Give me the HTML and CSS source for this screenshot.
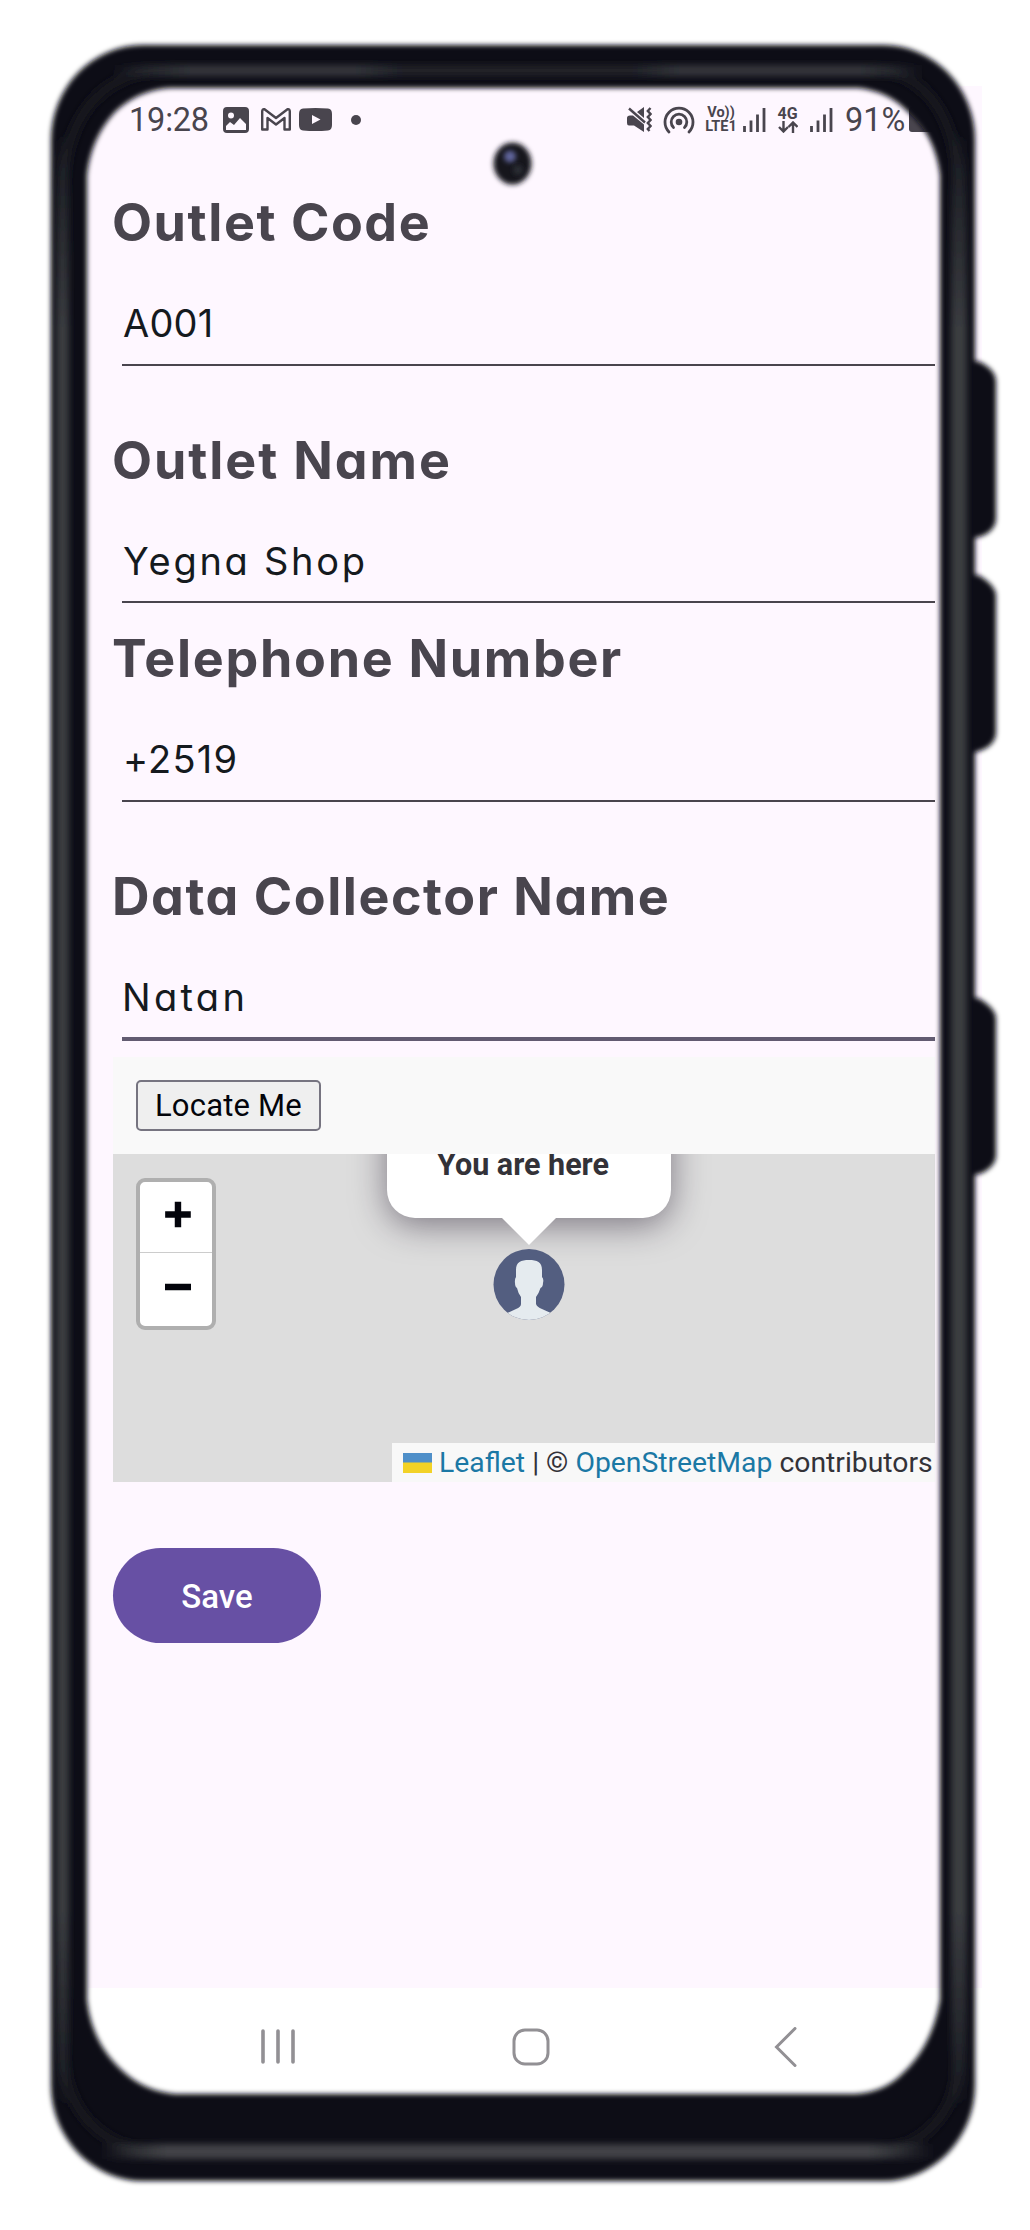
FILE: index.html
```html
<!DOCTYPE html>
<html lang="en">
<head>
<meta charset="utf-8">
<title>Outlet details</title>
<link rel="stylesheet" href="styles.css">
</head>
<body>
<main class="phone">
  <div class="screen">
    <header class="status">
      <div class="status-left">
        <span class="clock">19:28</span>
        <svg class="ic-image" width="26" height="26" viewBox="0 0 26 26"><path fill="#49454e" fill-rule="evenodd" d="M4 0H22Q26 0 26 4V22Q26 26 22 26H4Q0 26 0 22V4Q0 0 4 0ZM8 5.500A3 3 0 1 0 8 11.500A3 3 0 1 0 8 5.500ZM3 23H23V17L17 11L11 18L7 15L3 19Z"/></svg>
        <svg class="ic-mail" width="30" height="23" viewBox="0 0 30 23"><path fill="none" stroke="#49454e" stroke-width="2.400" stroke-linejoin="round" d="M1.200 21.500V3.500Q1.200 1 3.500 1.200L15 10L26.500 1.200Q28.800 1 28.800 3.500V21.500H23.500V10L15 16.500L6.500 10V21.500Z"/></svg>
        <svg class="ic-video" width="33" height="23" viewBox="0 0 33 23"><path fill="#49454e" fill-rule="evenodd" d="M4 .6Q16.500 -.5 29 .6Q33 1 33 6V17Q33 22 29 22.500Q16.500 23.500 4 22.500Q0 22 0 17V6Q0 1 4 .6ZM13 7V16L21.500 11.500Z"/></svg>
        <i class="dot"></i>
      </div>
      <div class="status-right">
        <svg class="ic-mute" width="25" height="25" viewBox="0 0 25 25"><path fill="#49454e" d="M0 11Q0 8.500 3 8.500H6L17 17.500V25L7 18.500H2Q0 18.500 0 16ZM10 5L17 0V11Z"/><path d="M2 1.500L18 15.500" stroke="#49454e" stroke-width="2.400"/><path d="M23.500 1L20.800 4L23.500 7L20.800 10L23.500 13L20.800 16L23.500 19L20.800 22L22.500 24" fill="none" stroke="#49454e" stroke-width="2.400"/></svg>
        <svg class="ic-hot" width="32" height="28" viewBox="0 0 32 28"><g fill="none" stroke="#49454e" stroke-width="2.800" stroke-linecap="round"><path d="M6 26A14 14 0 1 1 26 26"/><path d="M10.500 21.500A7.800 7.800 0 1 1 21.500 21.500"/></g><circle cx="16" cy="16" r="3.300" fill="#49454e"/></svg>
        <span class="volte"><b>Vo))</b><b>LTE1</b></span>
        <svg class="ic-sig" width="23" height="24" viewBox="0 0 23 24"><path stroke="#49454e" stroke-width="2.800" d="M1.500 24V18M8 24V12.500M14.500 24V6.500M21 24V0"/></svg>
        <span class="net"><b>4G</b><svg width="20" height="12" viewBox="0 0 20 12"><path fill="none" stroke="#49454e" stroke-width="2.400" d="M5.500 0V10M1 6L5.500 10.500L10 6M15 12V2M10.500 6L15 1.500L19.500 6"/></svg></span>
        <svg class="ic-sig2" width="23" height="24" viewBox="0 0 23 24"><path stroke="#49454e" stroke-width="2.800" d="M1.500 24V18M8 24V12.500M14.500 24V6.500M21 24V0"/></svg>
        <span class="percent">91%</span>
        <i class="battery"></i>
      </div>
    </header>
    <form class="form">
      <div class="field wide"><label class="code-label">Outlet Code</label><div class="value code"><span>A001</span></div></div>
      <div class="field"><label class="name-label">Outlet Name</label><div class="value name"><span>Yegna Shop</span></div></div>
      <div class="field wide"><label class="phone-label">Telephone Number</label><div class="value tel"><span>+2519</span></div></div>
      <div class="field last"><label class="collector-label">Data Collector Name</label><div class="value collector focused"><span>Natan</span></div></div>
      <section class="locator">
        <div class="toolbar"><button type="button" class="locate">Locate Me</button></div>
        <div class="map">
          <div class="zoom">
            <svg width="72" height="71" viewBox="0 0 72 71"><path stroke="#03040b" stroke-width="6.500" d="M25 33H51M38 20V46"/></svg>
            <svg width="72" height="72" viewBox="0 0 72 72"><path stroke="#03040b" stroke-width="6.500" d="M25 34H51"/></svg>
          </div>
          <div class="popup">You are here</div>
          <svg class="pin" width="72" height="104" viewBox="0 0 72 104">
            <defs><clipPath id="disc"><circle cx="36" cy="67.500" r="35.500"/></clipPath></defs>
            <path d="M7 -1H65L36 28Z" fill="#fff"/>
            <circle cx="36" cy="67.500" r="35.500" fill="#535e80"/>
            <path clip-path="url(#disc)" fill="#e5ebef" d="M36 43C44 43 49 45 49 53V60Q51 62 50 66Q50 70 47.500 71Q46 76 43 80V87Q44 90 49 92L60 97V104H12V97L23 92Q28 90 28 87V80Q25 76 24 71Q22 70 22 66Q21.500 62 23 60V53C23 45 28 43 36 43Z"/>
          </svg>
          <div class="credit">
            <svg width="29" height="20" viewBox="0 0 29 20"><path fill="#4f8fc9" d="M0 0H29V10H0Z"/><path fill="#f2d226" d="M0 9.500H29V20H0Z"/></svg>
            <span><a>Leaflet</a> | © <a>OpenStreetMap</a> contributors</span>
          </div>
        </div>
      </section>
      <button type="button" class="save">Save</button>
    </form>
    <nav class="nav">
      <svg width="34" height="38" viewBox="0 0 34 38"><path stroke="#929094" stroke-width="3.600" stroke-linecap="round" d="M2 3V34M17 3V34M32 3V34"/></svg>
      <svg class="home" width="38" height="38" viewBox="0 0 38 38"><rect x="2" y="2" width="34" height="34" rx="11" fill="none" stroke="#929094" stroke-width="3"/></svg>
      <svg width="24" height="40" viewBox="0 0 24 40"><path fill="none" stroke="#929094" stroke-width="3" stroke-linecap="round" d="M21 1.500L2.500 20L21 38.500"/></svg>
    </nav>
  </div>
  <svg class="frame" width="1030" height="2230" viewBox="0 0 1030 2230">
    <defs>
      <filter id="soft" x="-5%" y="-5%" width="110%" height="110%"><feGaussianBlur stdDeviation="2.800"/></filter>
      <filter id="glow" x="-50%" y="-50%" width="200%" height="200%"><feGaussianBlur stdDeviation="2.500"/></filter>
      <filter id="sheen" filterUnits="userSpaceOnUse" x="0" y="0" width="1030" height="2230"><feGaussianBlur stdDeviation="3"/></filter>
      <linearGradient id="top" gradientUnits="userSpaceOnUse" x1="110" y1="0" x2="925" y2="0">
        <stop offset="0" stop-color="#34363b" stop-opacity="0"/><stop offset=".1" stop-color="#34363b"/><stop offset=".3" stop-color="#34363b"/><stop offset=".36" stop-color="#202228"/><stop offset=".64" stop-color="#202228"/><stop offset=".7" stop-color="#34363b"/><stop offset=".92" stop-color="#34363b"/><stop offset="1" stop-color="#34363b" stop-opacity="0"/>
      </linearGradient>
      <linearGradient id="bottom" gradientUnits="userSpaceOnUse" x1="100" y1="0" x2="935" y2="0">
        <stop offset="0" stop-color="#424347" stop-opacity="0"/><stop offset=".08" stop-color="#424347"/><stop offset=".92" stop-color="#424347"/><stop offset="1" stop-color="#424347" stop-opacity="0"/>
      </linearGradient>
      <linearGradient id="side" gradientUnits="userSpaceOnUse" x1="0" y1="130" x2="0" y2="2110">
        <stop offset="0" stop-color="#3a3c40" stop-opacity="0"/><stop offset=".1" stop-color="#3a3c40"/><stop offset=".9" stop-color="#3a3c40"/><stop offset="1" stop-color="#3a3c40" stop-opacity="0"/>
      </linearGradient>
    </defs>
    <g filter="url(#soft)" fill="#0c0f15">
      <path d="M968 359L980 362Q996 370 996 382V518Q996 530 982 536L968 540ZM968 572L980 576Q996 586 996 596V732Q996 744 982 750L968 755ZM968 995L980 999Q996 1009 996 1019V1155Q996 1166 982 1173L968 1177Z"/>
      <path fill-rule="evenodd" d="M143 45H883A92 95 0 0 1 975 140V2085A92 96 0 0 1 883 2181H143A92 96 0 0 1 51 2085V140A92 95 0 0 1 143 45ZM170 88Q138 90 115 112Q91 138 87 175V2000Q92 2045 125 2073Q145 2091 175 2094H855Q885 2092 903 2073Q932 2046 940 2000V175Q935 135 908 112Q888 91 858 88Z"/>
    </g>
    <g filter="url(#sheen)" fill="none">
      <path d="M63 180Q72 85 150 71H885Q950 84 959 180V2060Q954 2135 885 2151H143Q72 2135 63 2060Z" stroke="#17191f" stroke-width="11"/>
      <path d="M56 130H69V2110H56ZM951 130H967V2110H951Z" fill="url(#side)"/>
      <path d="M110 65H925V76H110Z" fill="url(#top)"/>
      <path d="M100 2144H935V2159H100Z" fill="url(#bottom)"/>
    </g>
    <ellipse cx="512.500" cy="163.500" rx="19" ry="21" fill="#15171f" filter="url(#glow)"/>
    <circle cx="510" cy="156.500" r="6" fill="#60659c" filter="url(#glow)"/>
    <circle cx="518" cy="170" r="5" fill="#2c2e36" filter="url(#glow)"/>
  </svg>
</main>
</body>
</html>
```
FILE: styles.css
```css
* { box-sizing: border-box; }
body { margin: 0; background: #fff; font-family: Roboto, sans-serif; }
svg { display: block; flex: none; }
.phone { position: relative; width: 1030px; height: 2230px; overflow: hidden; padding: 86px 48px 0 88px; }
.screen { width: 894px; height: 2009px; background: #fef7ff; display: flex; flex-direction: column; }
.frame { position: absolute; inset: 0; pointer-events: none; }

.status { height: 67px; padding: 0 47px 0 41px; display: flex; align-items: center; justify-content: space-between; color: #49454e; }
.status-left, .status-right { display: flex; align-items: center; height: 40px; }
.clock, .percent { font-size: 32.500px; line-height: 40px; font-weight: 400; white-space: nowrap; }
.clock { width: 95px; letter-spacing: -.2px; }
.ic-image { margin-left: -1px; }
.ic-mail { margin-left: 12px; }
.ic-video { margin-left: 8px; }
.dot { width: 10px; height: 10px; border-radius: 5px; background: #49454e; margin-left: 19px; }
.ic-hot { margin-left: 11px; }
.volte { margin-left: 9px; width: 34px; display: flex; flex-direction: column; align-items: center; font-size: 14.500px; line-height: 14px; }
.ic-sig { margin-left: 5px; }
.net { margin-left: 10px; width: 23px; display: flex; flex-direction: column; align-items: center; font-size: 16px; line-height: 14px; }
.ic-sig2 { margin-left: 11px; }
.percent { width: 64px; margin-left: 12px; }
.battery { width: 26px; height: 25px; background: #49454e; border-radius: 3px; }

.form { height: 1835px; padding: 40px 0 0 25px; display: flex; flex-direction: column; align-items: flex-start; }
.field { width: 822px; height: 172.500px; margin-bottom: 26px; }
.field.wide { margin-bottom: 65px; }
.field.last { margin-bottom: 18px; }
.field label { display: block; margin-left: -1px; font: 650 52px/60px Inter, sans-serif; font-feature-settings: "cv11"; color: #49454e; white-space: nowrap; }
.field .code-label { letter-spacing: 1.550px; }
.field .name-label { letter-spacing: 1.900px; }
.field .phone-label { letter-spacing: 1.700px; }
.field .collector-label { letter-spacing: 1.550px; }
.value { margin: 45px 0 0 9px; padding-left: 1px; height: 67.500px; border-bottom: 2px solid #49454e; font: 400 38px/50px Inter, sans-serif; font-feature-settings: "cv11"; color: #151a1e; white-space: nowrap; }
.value.code { letter-spacing: .2px; }
.value.name { letter-spacing: 2.700px; }
.value.tel { letter-spacing: 1.200px; }
.value.collector { letter-spacing: 3.300px; padding-left: 0; }
.value.focused { height: 69.500px; border-bottom: 4px solid #625b71; }

.locator { width: 822px; }
.toolbar { height: 97px; background: #f9f9f9; padding: 23px 0 0 23px; }
.locate { width: 185px; height: 51px; padding: 0; border: 2px solid #767480; border-radius: 5px; background: #efefef; color: #03040b; font: 400 31px/45px Roboto, sans-serif; letter-spacing: .2px; white-space: nowrap; }
.map { position: relative; height: 328px; overflow: hidden; background: #ddd; }
.zoom { position: absolute; left: 23px; top: 24px; width: 80px; height: 152px; border: 4px solid #afafaf; border-radius: 9px; background: #fff; }
.zoom svg:first-child { border-bottom: 1px solid #ccc; }
.popup { position: absolute; left: 274px; top: -60px; width: 284px; height: 124px; border-radius: 28px; background: #fff; box-shadow: 0 7px 34px rgba(30, 20, 40, .5); text-align: center; color: #333238; font: 700 30.500px/36px Roboto, sans-serif; padding: 53px 12px 0 0; white-space: nowrap; }
.pin { position: absolute; left: 379.500px; top: 63px; }
.credit { position: absolute; left: 279px; right: 0; bottom: 0; height: 39px; background: #f8f8f8; display: flex; align-items: center; padding-left: 11px; gap: 7px; color: #333238; font: 400 28.350px/36px Roboto, sans-serif; white-space: nowrap; }
.credit a { color: #1b78a5; }
.save { margin-top: 66px; width: 208px; height: 95px; padding: 2px 0 0; border: 0; border-radius: 48px; background: #6750a4; color: #fff; font: 500 33px/93px Roboto, sans-serif; }
.nav { height: 107px; margin-top: auto; background: #fff; padding: 10px 184px 0 173px; display: flex; align-items: center; justify-content: space-between; }
.home { margin-right: 7px; }
```
